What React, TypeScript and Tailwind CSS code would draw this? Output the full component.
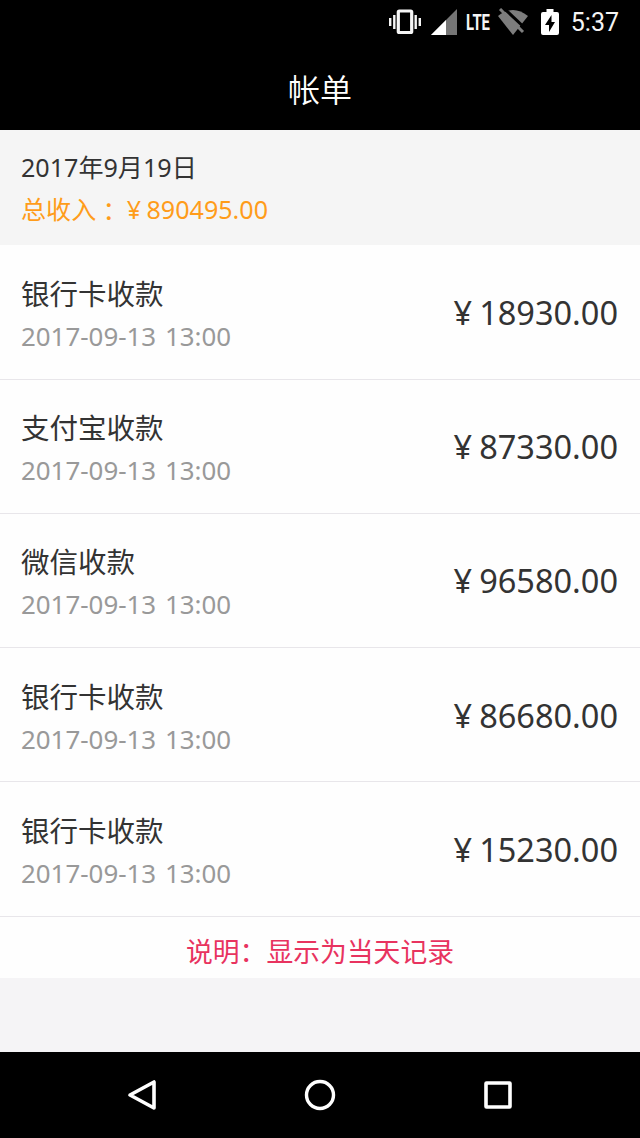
import type { ReactNode } from 'react';

interface Bill {
  id: number;
  title: string;
  time: string;
  amount: string;
}

const bills: Bill[] = [
  { id: 1, title: '银行卡收款', time: '2017-09-13 13:00', amount: '18930.00' },
  { id: 2, title: '支付宝收款', time: '2017-09-13 13:00', amount: '87330.00' },
  { id: 3, title: '微信收款', time: '2017-09-13 13:00', amount: '96580.00' },
  { id: 4, title: '银行卡收款', time: '2017-09-13 13:00', amount: '86680.00' },
  { id: 5, title: '银行卡收款', time: '2017-09-13 13:00', amount: '15230.00' },
];

function StatusBar() {
  return (
    <div className="flex h-[44px] items-center justify-end pr-[21px] text-[#f5f5f5]">
      {/* vibrate */}
      <svg className="h-[28px] w-[34px]" viewBox="0 0 34 28" fill="none" stroke="#f5f5f5">
        <rect x="10.300" y="3" width="13.400" height="21.500" rx="1" strokeWidth="3.200" />
        <path d="M6.300 7v14M27.700 7v14" strokeWidth="2.400" />
        <path d="M2.200 10v8M31.800 10v8" strokeWidth="2.400" />
      </svg>
      {/* signal */}
      <svg className="ml-[9px] h-[26px] w-[26px]" viewBox="0 0 26 26">
        <path d="M26 0v26H0z" fill="#767676" />
        <path d="M15 11v15H0z" fill="white" />
      </svg>
      <span className="ml-[9px] w-[26px] origin-left scale-x-[0.66] font-['Roboto'] text-[22.500px] leading-none font-bold">
        LTE
      </span>
      {/* wifi off */}
      <svg className="ml-[5px] h-[28px] w-[32px]" viewBox="0 0 32 28">
        <path d="M1 8Q16 -4 31 8L16 27z" fill="#7d7d7d" />
        <path d="M5 -1.500L30 22" stroke="black" strokeWidth="3" />
        <path d="M3 1L26 24" stroke="#7d7d7d" strokeWidth="3" />
      </svg>
      {/* battery */}
      <svg className="ml-[12px] h-[26px] w-[18px]" viewBox="0 0 18 26">
        <path d="M5.500 0h7v3H16q2 0 2 2v19q0 2-2 2H2q-2 0-2-2V5q0-2 2-2h3.500z" fill="white" />
        <path d="M10.500 6L4 16h4v7l6-10h-3.500z" fill="black" />
      </svg>
      <span className="ml-[12px] pt-[1px] font-['Roboto'] text-[25px] leading-none font-normal">5:37</span>
    </div>
  );
}

function Money({ children, className }: { children: ReactNode; className?: string }) {
  return (
    <span className={className}>
      <span className="inline-block w-[1em] text-center">¥</span>
      {children}
    </span>
  );
}

function BillRow({ bill }: { bill: Bill }) {
  return (
    <li className="flex h-[134.250px] items-center justify-between border-b border-[#e8e6ea] pr-[22px] pl-[21px]">
      <div className="pt-[7px]">
        <div className="text-[28.500px] leading-[42px] text-[#333333]">{bill.title}</div>
        <div className="text-[25.900px] leading-[43px] text-[#999999] [word-spacing:2px]">{bill.time}</div>
      </div>
      <Money className="pt-[2px] text-[32.500px] leading-[44px] text-[#333333]">{bill.amount}</Money>
    </li>
  );
}

export default function App() {
  return (
    <div
      lang="zh-CN"
      className="flex h-[1138px] w-[640px] flex-col overflow-hidden bg-[#f5f4f6] font-['Noto_Sans','Noto_Sans_CJK_SC',sans-serif] font-normal whitespace-nowrap"
    >
      <header className="h-[130px] shrink-0 bg-black">
        <StatusBar />
        <h1 className="text-center text-[32px] leading-[92px] font-[350] text-white">帐单</h1>
      </header>

      <section className="h-[115.250px] shrink-0 bg-[#f5f5f5] pt-[16px] pl-[21px]">
        <p className="text-[25.100px] leading-[42px] text-[#333333]">2017年9月19日</p>
        <p className="h-[42px] text-[25.100px] leading-[42px] text-[#ff9c1a]">
          总收入
          <span
            lang="zh-TW"
            className="inline-block translate-y-[2px] font-['Noto_Sans_CJK_TC'] leading-none"
          >
            ：
          </span>
          <Money>890495.00</Money>
        </p>
      </section>

      <ul className="shrink-0 bg-[#fefefe]">
        {bills.map((bill) => (
          <BillRow key={bill.id} bill={bill} />
        ))}
      </ul>
      <p className="h-[61.500px] shrink-0 bg-[#fefefe] text-center text-[26.800px] leading-[70px] text-[#e8335f]">
        说明：显示为当天记录
      </p>

      <nav className="mt-auto flex h-[86px] shrink-0 items-center justify-between bg-black px-[127px]">
        <svg className="h-[32px] w-[30px]" viewBox="0 0 30 32" fill="none" stroke="white">
          <path d="M3 16L27 3v26z" strokeWidth="3.600" strokeLinejoin="round" />
        </svg>
        <svg className="h-[32px] w-[32px]" viewBox="0 0 32 32" fill="none" stroke="white">
          <circle cx="16" cy="16" r="13.500" strokeWidth="3.400" />
        </svg>
        <svg className="h-[30px] w-[30px]" viewBox="0 0 30 30" fill="none" stroke="white">
          <rect x="3" y="3" width="24" height="24" rx="0.500" strokeWidth="3.600" />
        </svg>
      </nav>
    </div>
  );
}
